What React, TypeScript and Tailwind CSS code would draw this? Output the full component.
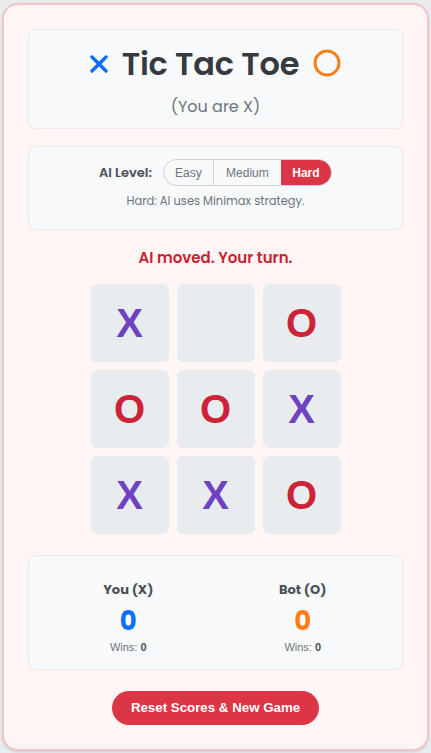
import React from "react";

const BOARD = ["X", "", "O", "O", "O", "X", "X", "X", "O"];

const sans = "font-['Poppins','Inter','Noto_Sans',sans-serif]";
const arial = "font-['Liberation_Sans',Arial,sans-serif]";

function Cell({ v }: { v: string }) {
  return (
    <div
      className={`flex h-[78px] w-[78px] items-center justify-center rounded-[6px] bg-[#e9ecef] text-[40px] font-bold leading-none ${arial} ${
        v === "X" ? "text-[#6f42c1]" : "text-[#cc2336]"
      }`}
    >
      {v}
    </div>
  );
}

function Score({ label, color }: { label: string; color: string }) {
  return (
    <div>
      <p className="text-[13px] font-bold leading-5 text-[#495057]">{label}</p>
      <p className={`mt-[4px] text-[26px] font-bold leading-[34px] ${color}`}>0</p>
      <p className={`mt-[1px] text-[11px] leading-4 text-[#6c757d] ${arial}`}>
        Wins: <b className="text-[#495057]">0</b>
      </p>
    </div>
  );
}

export default function App() {
  return (
    <div className={`min-h-[753px] bg-[#e9ecef] px-[2px] pt-[3px] ${sans}`}>
      <div className="rounded-[16px] border-2 border-[#f5c2c7] bg-[#fff5f5] p-6 shadow-sm">
        <div className="rounded-lg border border-[#e6e9ee] bg-[#f8f9fa] pb-[9px] pt-[14px] text-center">
          <div className="flex items-center justify-center gap-[14px]">
            <svg width="18" height="18" viewBox="0 0 18 18" className="mt-[-1px]">
              <path d="M2 2L16 16M16 2L2 16" stroke="#0d6efd" strokeWidth="3.4" strokeLinecap="round" />
            </svg>
            <h1 className="text-[32px] font-semibold leading-[40px] tracking-[-0.2px] text-[#343a40]">
              Tic Tac Toe
            </h1>
            <svg width="28" height="28" viewBox="0 0 28 28" className="mt-[-2px]">
              <circle cx="14" cy="14" r="12" fill="none" stroke="#fd7e14" strokeWidth="3" />
            </svg>
          </div>
          <p className="mt-[11px] text-[16px] leading-6 text-[#6c757d]">(You are X)</p>
        </div>

        <div className="mt-[17px] rounded-lg border border-[#e6e9ee] bg-[#f8f9fa] pb-[20px] pt-3">
          <div className="flex items-center justify-center gap-[11px]">
            <span className="text-[13px] font-semibold text-[#495057]">AI Level:</span>
            <div className={`flex h-[27px] overflow-hidden rounded-full border border-[#ced4da] text-[12px] ${arial}`}>
              <button type="button" className="w-[49px] text-[#6c757d]">
                Easy
              </button>
              <button type="button" className="w-[68px] border-l border-[#ced4da] text-[#6c757d]">
                Medium
              </button>
              <button type="button" className="w-[50px] bg-[#dc3545] font-bold text-white">
                Hard
              </button>
            </div>
          </div>
          <p className="mt-[7px] text-center text-[11.5px] leading-4 text-[#6c757d]">
            Hard: AI uses Minimax strategy.
          </p>
        </div>

        <p className="mt-[17px] text-center text-[15px] font-semibold leading-[22px] text-[#c82333]">
          AI moved. Your turn.
        </p>

        <div className="mx-auto mt-[15px] grid w-[250px] grid-cols-3 gap-2">
          {BOARD.map((v, i) => (
            <Cell key={i} v={v} />
          ))}
        </div>

        <div className="mt-[21px] grid grid-cols-2 rounded-lg border border-[#e6e9ee] bg-[#f8f9fa] px-3 pb-[14px] pt-[24px] text-center">
          <Score label="You (X)" color="text-[#0d6efd]" />
          <Score label="Bot (O)" color="text-[#fd7e14]" />
        </div>

        <div className="mt-[21px] flex justify-center">
          <button
            type="button"
            className={`h-[34px] w-[207px] rounded-full bg-[#dc3545] text-[13.3px] font-bold text-white ${arial}`}
          >
            Reset Scores &amp; New Game
          </button>
        </div>
      </div>
    </div>
  );
}
